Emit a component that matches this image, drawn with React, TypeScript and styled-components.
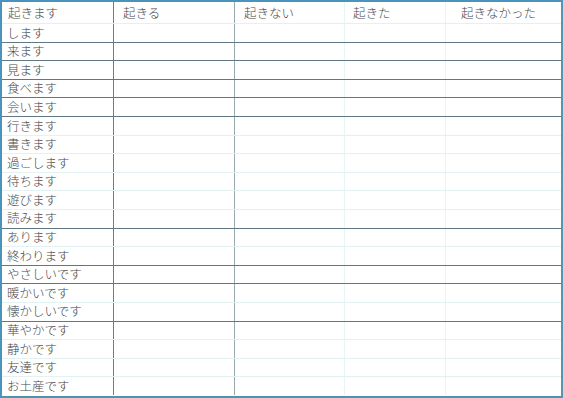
import styled, { createGlobalStyle } from 'styled-components';

const GlobalStyle = createGlobalStyle`
  html, body {
    margin: 0;
    padding: 0;
    background: #ffffff;
  }
  body {
    font-family: "Noto Sans CJK JP", "Noto Sans", sans-serif;
  }
`;

const Sheet = styled.div`
  box-sizing: border-box;
  width: 563px;
  height: 398px;
  border: 2px solid #4a93bd;
  border-right-color: #5596b0;
  border-bottom-color: #4f93ac;
  display: flex;
  flex-direction: column;
  background: #ffffff;
`;

const Row = styled.div<{ $head?: boolean; $strong?: boolean; $last?: boolean }>`
  box-sizing: border-box;
  display: grid;
  grid-template-columns: 112px 121px 110px 101px 1fr;
  flex: ${({ $head }) => ($head ? '0 0 22px' : '1 1 0')};
  border-bottom: 1px solid
    ${({ $strong, $last }) => ($last ? 'transparent' : $strong ? '#5f7884' : '#e2f1f2')};
`;

type Line = 'dark' | 'mid' | 'faint' | 'none';

const Cell = styled.div<{ $line: Line; $pad?: number }>`
  box-sizing: border-box;
  display: flex;
  align-items: center;
  padding-left: ${({ $pad }) => $pad ?? 5}px;
  font-size: 12.5px;
  font-weight: 300;
  line-height: 1;
  color: #484848;
  white-space: nowrap;
  overflow: hidden;
  border-right: 1px solid
    ${({ $line }) =>
      $line === 'dark' ? '#6c7f88' : $line === 'mid' ? '#9aa9ae' : $line === 'faint' ? '#e8f5f5' : 'transparent'};
`;

const HeadCell = styled(Cell)`
  padding-top: 1px;
`;

const lines: Line[] = ['dark', 'mid', 'faint', 'faint', 'none'];
const headPads = [6, 9, 9, 8, 15];

const headers = ['起きます', '起きる', '起きない', '起きた', '起きなかった'];

const verbs = [
  'します',
  '来ます',
  '見ます',
  '食べます',
  '会います',
  '行きます',
  '書きます',
  '過ごします',
  '待ちます',
  '遊びます',
  '読みます',
  'あります',
  '終わります',
  'やさしいです',
  '暖かいです',
  '懐かしいです',
  '華やかです',
  '静かです',
  '友達です',
  'お土産です',
];

// rows followed by a dark separator (group ends)
const groupEnds = new Set([0, 1, 2, 3, 4, 10, 12, 13, 15]);

export default function App() {
  return (
    <>
      <GlobalStyle />
      <Sheet>
        <Row $head>
          {headers.map((h, i) => (
            <HeadCell key={h} $line={lines[i]} $pad={headPads[i]}>
              {h}
            </HeadCell>
          ))}
        </Row>
        {verbs.map((v, r) => (
          <Row key={v} $strong={groupEnds.has(r)} $last={r === verbs.length - 1}>
            {lines.map((l, i) => (
              <Cell key={i} $line={l}>
                {i === 0 ? v : ''}
              </Cell>
            ))}
          </Row>
        ))}
      </Sheet>
    </>
  );
}
